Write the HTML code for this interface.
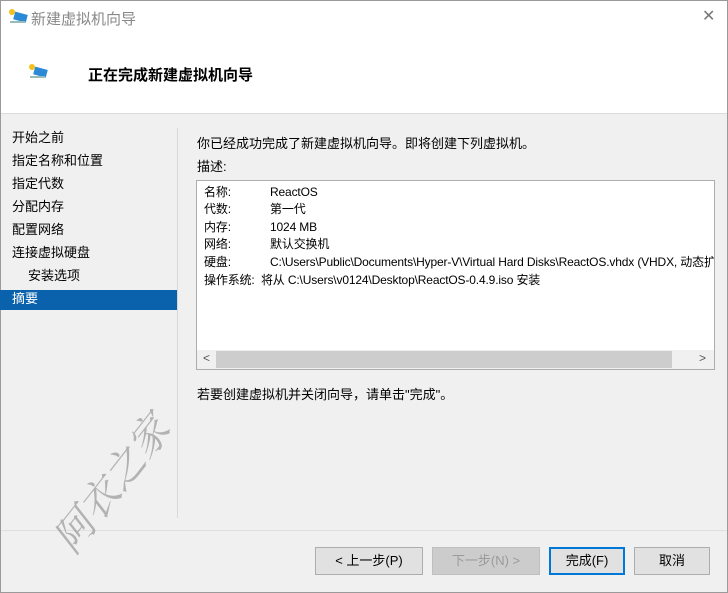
<!DOCTYPE html>
<html><head><meta charset="utf-8"><style>
*{margin:0;padding:0;box-sizing:border-box}
body{width:728px;height:593px;overflow:hidden;background:#f0f0f0;font-family:"Liberation Sans","Microsoft YaHei","Noto Sans CJK SC",sans-serif;font-size:12px;color:#000;position:relative}
.abs{position:absolute}
.win{position:absolute;left:0;top:0;width:728px;height:593px;border:1px solid #9a9a9a}
.title{left:1px;top:1px;width:726px;height:34px;background:#fff}
.hdr{left:1px;top:35px;width:726px;height:79px;background:#fff;border-bottom:1px solid #dcdcdc}
.nav div{position:absolute;left:12px;font-size:13px;line-height:20px;white-space:nowrap}
.btn{position:absolute;top:547px;height:28px;background:#e1e1e1;border:1px solid #adadad;font-size:13px;text-align:center;line-height:26px}
.t{font-size:13px;white-space:nowrap}
.lb div{position:absolute;white-space:nowrap;font-size:12px;line-height:18px;letter-spacing:-0.15px}
</style></head><body>
<div class="win"></div>
<div class="abs title"></div>
<svg class="abs" style="left:8px;top:8px" width="20" height="18"><circle cx="4" cy="4" r="3" fill="#f2c21b"/><rect x="6" y="5" width="13" height="8" fill="#2b8ad6" transform="rotate(15 12 9)"/><rect x="2" y="13" width="15" height="2" fill="#9bb"/></svg>
<div class="abs" style="left:31px;top:8px;font-size:15px;color:#888">新建虚拟机向导</div>
<div class="abs" style="left:702px;top:6px;font-size:16px;color:#777">✕</div>
<div class="abs hdr"></div>
<svg class="abs" style="left:28px;top:63px" width="20" height="18"><circle cx="4" cy="4" r="3" fill="#f2c21b"/><rect x="6" y="5" width="13" height="8" fill="#2b8ad6" transform="rotate(15 12 9)"/><rect x="2" y="13" width="15" height="2" fill="#9bb"/></svg>
<div class="abs" style="left:88px;top:64px;font-size:15px;font-weight:bold">正在完成新建虚拟机向导</div>
<div class="abs" style="left:0;top:290px;width:177px;height:20px;background:#0b62ac"></div>
<div class="nav">
<div style="top:128px">开始之前</div>
<div style="top:151px">指定名称和位置</div>
<div style="top:174px">指定代数</div>
<div style="top:197px">分配内存</div>
<div style="top:220px">配置网络</div>
<div style="top:243px">连接虚拟硬盘</div>
<div style="top:266px;left:28px">安装选项</div>
<div style="top:289px;color:#fff">摘要</div>
</div>
<div class="abs" style="left:177px;top:128px;width:1px;height:390px;background:#d8d8d8"></div>
<div class="abs t" style="left:197px;top:133px">你已经成功完成了新建虚拟机向导。即将创建下列虚拟机。</div>
<div class="abs t" style="left:197px;top:156px">描述:</div>
<div class="abs" style="left:196px;top:180px;width:519px;height:190px;background:#fff;border:1px solid #adadad"></div>
<div class="lb">
<div style="left:204px;top:183px">名称:</div><div style="left:270px;top:183px">ReactOS</div>
<div style="left:204px;top:200px">代数:</div><div style="left:270px;top:200px">第一代</div>
<div style="left:204px;top:218px">内存:</div><div style="left:270px;top:218px">1024 MB</div>
<div style="left:204px;top:235px">网络:</div><div style="left:270px;top:235px">默认交换机</div>
<div style="left:204px;top:253px">硬盘:</div><div style="left:270px;top:253px;width:444px;overflow:hidden">C:\Users\Public\Documents\Hyper-V\Virtual Hard Disks\ReactOS.vhdx (VHDX, 动态扩展)</div>
<div style="left:204px;top:271px">操作系统:&nbsp; 将从 C:\Users\v0124\Desktop\ReactOS-0.4.9.iso 安装</div>
</div>
<div class="abs" style="left:197px;top:350px;width:517px;height:19px;background:#f0f0f0"></div>
<div class="abs" style="left:216px;top:351px;width:456px;height:17px;background:#cdcdcd"></div>
<div class="abs" style="left:203px;top:351px;font-size:12px;color:#555">&lt;</div>
<div class="abs" style="left:699px;top:351px;font-size:12px;color:#555">&gt;</div>
<div class="abs t" style="left:197px;top:384px">若要创建虚拟机并关闭向导，请单击"完成"。</div>
<div class="abs" style="left:1px;top:530px;width:726px;height:1px;background:#dfdfdf"></div>
<div class="btn" style="left:315px;width:108px">&lt; 上一步(P)</div>
<div class="btn" style="left:432px;width:108px;background:#cccccc;border-color:#bfbfbf;color:#9a9a9a">下一步(N) &gt;</div>
<div class="btn" style="left:549px;width:76px;border:2px solid #0078d7;line-height:24px">完成(F)</div>
<div class="btn" style="left:634px;width:76px">取消</div>
<div class="abs" style="left:38px;top:528px;font-size:40px;color:#999;font-style:italic;transform:rotate(-52deg);transform-origin:left top;white-space:nowrap;font-family:'Liberation Serif','Noto Serif CJK SC',serif;opacity:.7">阿衣之家</div>
</body></html>
